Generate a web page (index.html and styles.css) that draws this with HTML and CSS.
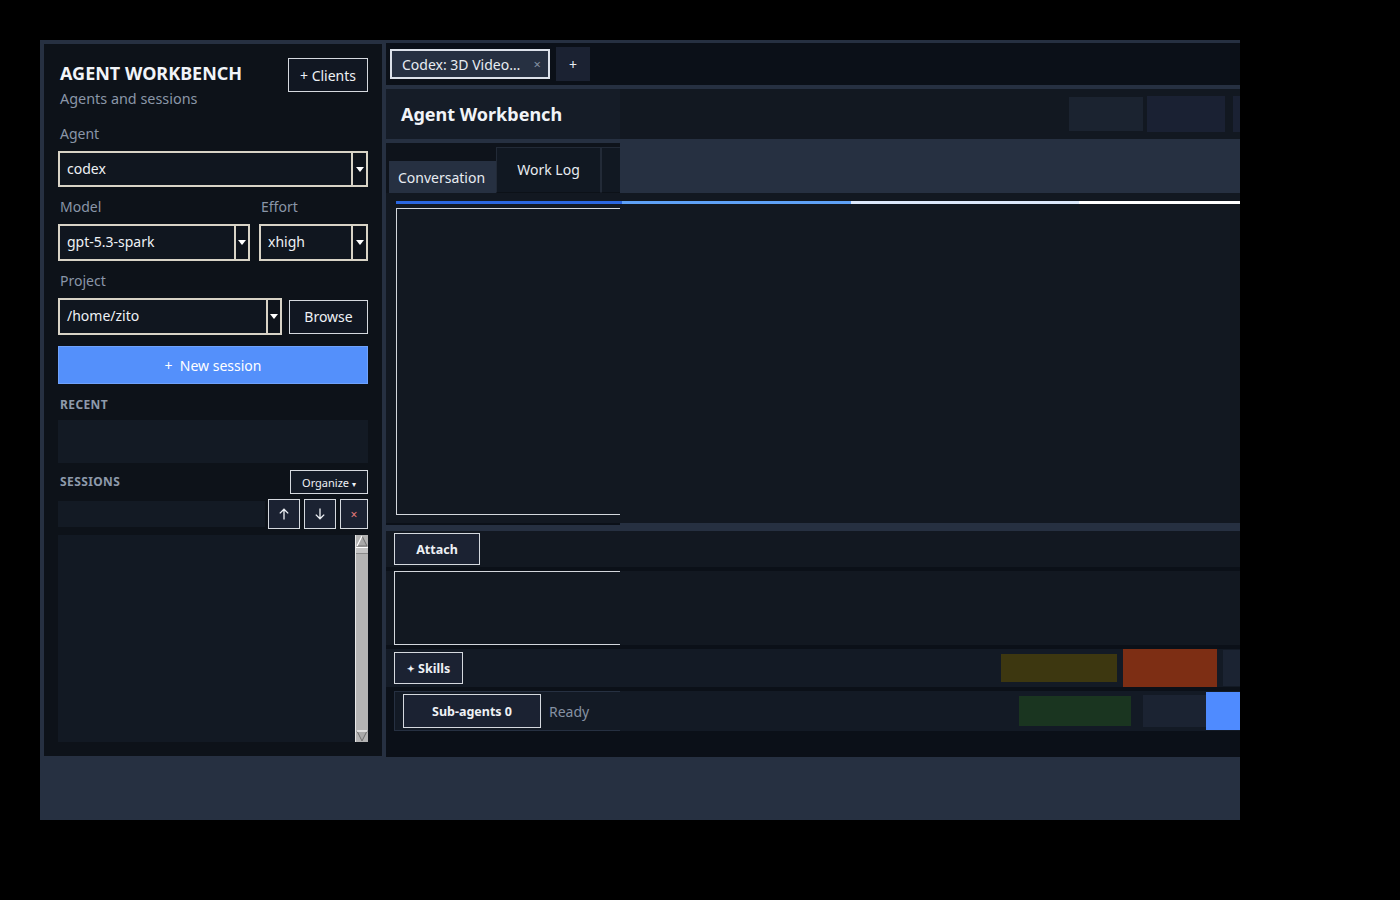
FILE: index.html
```html
<!DOCTYPE html>
<html>
<head>
    <meta charset="utf-8">
    <title>Agent Workbench</title>
    <link rel="stylesheet" href="styles.css">
</head>
<body>
<div class="app">
    <aside class="sidebar">
        <div class="brand">
            <div>
                <div class="brand-title">AGENT WORKBENCH</div>
                <div class="brand-sub">Agents and sessions</div>
            </div>
            <button class="btn clients">+ Clients</button>
        </div>

        <div class="label first">Agent</div>
        <div class="select"><span class="field">codex</span><span class="drop"><i></i></span></div>

        <div class="pair">
            <div class="col model">
                <div class="label">Model</div>
                <div class="select"><span class="field">gpt-5.3-spark</span><span class="drop"><i></i></span></div>
            </div>
            <div class="col effort">
                <div class="label">Effort</div>
                <div class="select"><span class="field">xhigh</span><span class="drop"><i></i></span></div>
            </div>
        </div>

        <div class="label project-label">Project</div>
        <div class="project-row">
            <div class="select project"><span class="field">/home/zito</span><span class="drop"><i></i></span></div>
            <button class="btn browse">Browse</button>
        </div>

        <button class="new-session">+&nbsp;&nbsp;New session</button>

        <div class="section-title recent-title">RECENT</div>
        <div class="recent"></div>

        <div class="sessions-head">
            <div class="section-title">SESSIONS</div>
            <button class="btn organize">Organize <span class="caret">▾</span></button>
        </div>
        <div class="search-row">
            <div class="search"></div>
            <button class="btn icon" title="Move up">
                <svg width="12" height="12" viewBox="0 0 12 12"><path d="M6 11.5 V1.2 M1.8 5.4 L6 1.2 L10.2 5.4" fill="none" stroke="#eef1f5" stroke-width="1.3"/></svg>
            </button>
            <button class="btn icon" title="Move down">
                <svg width="12" height="12" viewBox="0 0 12 12"><path d="M6 0.5 V10.8 M1.8 6.6 L6 10.8 L10.2 6.6" fill="none" stroke="#eef1f5" stroke-width="1.3"/></svg>
            </button>
            <button class="btn icon del" title="Delete">×</button>
        </div>
        <div class="session-list">
            <div class="scrollbar">
                <div class="sb-arrow up">
                    <svg width="12" height="12" viewBox="0 0 12 12"><path d="M1 11 L6 1 L11 11 Z" fill="#a9a9a9" stroke="#6e6e6e" stroke-width="1"/><path d="M1 11 L6 1" stroke="#ffffff" stroke-width="1.4"/></svg>
                </div>
                <div class="sb-thumb"></div>
                <div class="sb-trough"></div>
                <div class="sb-arrow down">
                    <svg width="12" height="12" viewBox="0 0 12 12"><path d="M1 1 L6 11 L11 1 Z" fill="#a9a9a9" stroke="#6e6e6e" stroke-width="1"/><path d="M1 1 L11 1" stroke="#ffffff" stroke-width="1.4"/></svg>
                </div>
            </div>
        </div>
    </aside>

    <main class="main">
        <div class="tabbar">
            <div class="doc-tab"><span>Codex: 3D Video…</span><span class="close">×</span></div>
            <button class="add-tab">+</button>
        </div>

        <div class="header">
            <div class="header-main">Agent Workbench</div>
            <div class="header-tools">
                <div class="tool t1"></div>
                <div class="tool t2"></div>
                <div class="tool t3"></div>
            </div>
        </div>

        <div class="notebook">
            <div class="nb-tabs">
                <div class="nb-strip">
                    <div class="nb-tab active">Conversation</div>
                    <div class="nb-tab">Work Log</div>
                    <div class="nb-tab stub"></div>
                </div>
            </div>
            <div class="nb-body">
                <div class="progress">
                    <span class="seg s1"></span>
                    <span class="seg s2"></span>
                    <span class="seg s3"></span>
                    <span class="seg s4"></span>
                </div>
                <div class="convo-clip"><div class="convo-box"></div></div>
            </div>
            <div class="nb-foot"></div>
        </div>

        <div class="composer">
            <div class="row attach-row">
                <button class="btn dark bold attach">Attach</button>
            </div>
            <div class="row text-row">
                <div class="text-clip"><div class="text-box"></div></div>
            </div>
            <div class="row skills-row">
                <button class="btn dark bold skills"><span class="star">✦</span> Skills</button>
                <div class="chip olive"></div>
                <div class="chip orange"></div>
                <div class="chip slate"></div>
            </div>
            <div class="row status-row">
                <div class="status-left">
                    <button class="btn dark bold subagents">Sub-agents 0</button>
                    <span class="ready">Ready</span>
                </div>
                <div class="chip green"></div>
                <div class="chip slate small"></div>
                <div class="chip blue"></div>
            </div>
        </div>
    </main>
</div>
</body>
</html>
```

FILE: styles.css
```css
body {
    margin: 0;
    background-color: #000000;
    font-family: "Noto Sans", "Open Sans", sans-serif;
    color: #eef1f5;
}
button {
    font-family: "Noto Sans", "Open Sans", sans-serif;
    cursor: pointer;
}
.app {
    margin: 40px 0 0 40px;
    width: 1200px;
    height: 780px;
    box-sizing: border-box;
    padding: 3px 0 0 4px;
    background-color: #263041;
    display: flex;
    gap: 4px;
    align-items: flex-start;
}

/* sidebar */
.sidebar {
    margin-top: 1px;
    width: 338px;
    height: 712px;
    box-sizing: border-box;
    padding: 14px;
    background-color: #0d1219;
    display: flex;
    flex-direction: column;
}
.brand {
    display: flex;
    justify-content: space-between;
    align-items: flex-start;
}
.brand-title {
    margin-top: 3px;
    font-size: 18px;
    line-height: 24px;
    font-weight: bold;
    color: #f1f4f8;
    padding-left: 2px;
}
.brand-sub {
    margin-top: 4px;
    font-size: 14.4px;
    line-height: 20px;
    color: #8a96a8;
    padding-left: 2px;
}
.btn {
    background-color: #111722;
    border: 1px solid #d5d9df;
    color: #eef1f5;
    font-size: 14px;
    padding: 0;
}
.clients {
    width: 80px;
    height: 34px;
}
.label {
    font-size: 14px;
    line-height: 20px;
    color: #8a96a8;
    padding-left: 2px;
    margin-bottom: 7px;
}
.label.first {
    margin-top: 15px;
}
.select {
    display: flex;
    height: 36px;
}
.select .field {
    flex: 1;
    border: 2px solid #d8d3c6;
    background-color: #10161f;
    padding-left: 7px;
    font-size: 14px;
    line-height: 32px;
    color: #eef1f5;
    white-space: nowrap;
    overflow: hidden;
}
.select .drop {
    width: 13px;
    border: 2px solid #d8d3c6;
    border-left: none;
    background-color: #0e131b;
    display: flex;
    align-items: center;
    justify-content: center;
}
.select .drop i {
    width: 0;
    height: 0;
    border-left: 4px solid transparent;
    border-right: 4px solid transparent;
    border-top: 5px solid #ffffff;
}
.pair {
    display: flex;
    gap: 9px;
    margin-top: 10px;
}
.col.model {
    width: 192px;
}
.col.effort {
    flex: 1;
}
.col.model .drop {
    width: 12px;
}
.pair .select {
    height: 37px;
}
.project-label {
    margin-top: 10px;
}
.project-row {
    display: flex;
    align-items: center;
    gap: 7px;
}
.select.project {
    width: 224px;
    height: 37px;
}
.select.project .drop {
    width: 12px;
}
.browse {
    width: 79px;
    height: 34px;
}
.new-session {
    margin-top: 11px;
    height: 38px;
    background-color: #5490fb;
    border: 1px solid #6fa2fc;
    color: #ffffff;
    font-size: 14px;
}
.section-title {
    font-size: 12px;
    line-height: 16px;
    font-weight: bold;
    letter-spacing: 0.4px;
    color: #8e9aab;
    padding-left: 2px;
}
.recent-title {
    margin-top: 13px;
}
.recent {
    margin-top: 7px;
    height: 43px;
    background-color: #131a24;
}
.sessions-head {
    margin-top: 7px;
    height: 24px;
    display: flex;
    justify-content: space-between;
    align-items: center;
}
.organize {
    width: 78px;
    height: 24px;
    font-size: 11px;
    background-color: #141b27;
}
.organize .caret {
    font-size: 8px;
}
.search-row {
    margin-top: 5px;
    height: 30px;
    display: flex;
    align-items: center;
    gap: 4px;
}
.search {
    flex: 1;
    height: 26px;
    margin-right: -1px;
    background-color: #131a24;
}
.icon {
    width: 32px;
    height: 30px;
    background-color: #1b2232;
    display: flex;
    align-items: center;
    justify-content: center;
}
.icon.del {
    width: 28px;
    color: #e57b7b;
    font-size: 12px;
}
.session-list {
    margin-top: 6px;
    height: 207px;
    background-color: #121923;
    display: flex;
    justify-content: flex-end;
}
.scrollbar {
    width: 13px;
    display: flex;
    flex-direction: column;
    background-color: #b3b3b3;
    border-left: 1px solid #e8e8e8;
    box-sizing: border-box;
}
.sb-arrow {
    height: 12px;
    display: flex;
    justify-content: center;
}
.sb-thumb {
    height: 5px;
    border-top: 1px solid #ffffff;
    border-bottom: 1px solid #8a8a8a;
    background-color: #c4c4c4;
}
.sb-trough {
    flex: 1;
}

/* main area */
.main {
    width: 854px;
    height: 714px;
    display: flex;
    flex-direction: column;
    overflow: hidden;
}
.tabbar {
    height: 42px;
    flex-shrink: 0;
    box-sizing: border-box;
    padding: 6px 0 0 4px;
    background-color: #0b1018;
    display: flex;
    align-items: flex-start;
    gap: 6px;
}
.doc-tab {
    width: 160px;
    height: 30px;
    box-sizing: border-box;
    border: 2px solid #dce1e9;
    background-color: #263041;
    display: flex;
    align-items: center;
    justify-content: space-between;
    padding: 0 7px 0 10px;
    font-size: 14px;
    color: #e8ecf1;
}
.doc-tab .close {
    font-size: 13px;
    color: #8390a2;
}
.add-tab {
    width: 34px;
    height: 34px;
    margin-top: -2px;
    border: none;
    background-color: #1b2232;
    color: #e8ecf1;
    font-size: 14px;
}
.header {
    margin-top: 4px;
    height: 50px;
    flex-shrink: 0;
    background-color: #121821;
    display: flex;
}
.header-main {
    width: 234px;
    flex-shrink: 0;
    box-sizing: border-box;
    padding-left: 15px;
    background-color: #151c27;
    font-size: 18px;
    font-weight: bold;
    line-height: 50px;
    color: #f1f4f8;
}
.header-tools {
    margin-left: 449px;
    display: flex;
    align-items: center;
    flex-shrink: 0;
}
.tool {
    flex-shrink: 0;
    background-color: #1a2133;
}
.tool.t1 {
    width: 74px;
    height: 34px;
    background-color: #1b2330;
}
.tool.t2 {
    width: 78px;
    height: 36px;
    margin-left: 4px;
}
.tool.t3 {
    width: 80px;
    height: 36px;
    margin-left: 8px;
}
.notebook {
    margin-top: 4px;
    flex-shrink: 0;
}
.nb-tabs {
    height: 50px;
    display: flex;
}
.nb-strip {
    width: 234px;
    overflow: hidden;
    box-sizing: border-box;
    padding-left: 3px;
    background-color: #0e131b;
    display: flex;
    align-items: flex-end;
}
.nb-tab {
    flex-shrink: 0;
    width: 105px;
    height: 46px;
    box-sizing: border-box;
    border: 1px solid #222a37;
    border-bottom-color: #0c1118;
    background-color: #111822;
    font-size: 14px;
    line-height: 20px;
    text-align: center;
    padding-top: 12px;
    color: #e8ecf1;
}
.nb-tab.active {
    width: 107px;
    height: 32px;
    border: none;
    background-color: #263041;
    text-align: left;
    padding: 7px 0 0 9px;
}
.nb-tab.stub {
    width: 30px;
}
.nb-body {
    height: 330px;
    box-sizing: border-box;
    padding: 8px 0 0 10px;
    background-color: #121821;
}
.progress {
    display: flex;
    height: 3px;
}
.seg {
    flex-shrink: 0;
}
.seg.s1 {
    width: 226px;
    background-color: #2a66e0;
}
.seg.s2 {
    width: 229px;
    background-color: #5ea1f7;
}
.seg.s3 {
    width: 228px;
    background-color: #dce8fb;
}
.seg.s4 {
    flex: 1;
    background-color: #ffffff;
}
.convo-clip {
    margin-top: 4px;
    width: 224px;
    overflow: hidden;
}
.convo-box {
    width: 300px;
    height: 307px;
    box-sizing: border-box;
    border: 1px solid #d3d7dd;
}
.nb-foot {
    width: 234px;
    height: 2px;
    background-color: #0b1018;
}
.composer {
    margin-top: 6px;
    height: 226px;
    box-sizing: border-box;
    padding-bottom: 26px;
    background-color: #0b1018;
    display: flex;
    flex-direction: column;
    gap: 4px;
}
.row {
    display: flex;
    align-items: center;
    box-sizing: border-box;
    padding-left: 8px;
}
.btn.dark {
    background-color: #1b2232;
}
.btn.bold {
    font-weight: bold;
    font-size: 12.5px;
    flex-shrink: 0;
}
.attach-row {
    height: 36px;
    background-color: #121821;
}
.attach {
    width: 86px;
    height: 32px;
}
.text-row {
    height: 74px;
    background-color: #121821;
    align-items: stretch;
}
.text-clip {
    width: 226px;
    overflow: hidden;
}
.text-box {
    width: 300px;
    height: 74px;
    box-sizing: border-box;
    border: 1px solid #d3d7dd;
}
.skills-row {
    height: 38px;
    background-color: #131a25;
}
.skills {
    width: 69px;
    height: 32px;
}
.star {
    font-size: 9px;
    vertical-align: 1px;
}
.chip {
    flex-shrink: 0;
}
.chip.olive {
    margin-left: 538px;
    width: 116px;
    height: 28px;
    background-color: #3d3710;
}
.chip.orange {
    margin-left: 6px;
    width: 94px;
    height: 38px;
    background-color: #7d2e14;
}
.chip.slate {
    margin-left: 6px;
    width: 80px;
    height: 36px;
    background-color: #1b2332;
}
.status-row {
    height: 40px;
    margin-left: 8px;
    padding-left: 0;
    background-color: #131a25;
}
.status-left {
    width: 226px;
    height: 40px;
    flex-shrink: 0;
    box-sizing: border-box;
    border: 1px solid #263041;
    border-right: none;
    padding-left: 8px;
    display: flex;
    align-items: center;
}
.subagents {
    width: 138px;
    height: 34px;
}
.ready {
    margin-left: 8px;
    font-size: 14px;
    color: #8591a2;
}
.chip.green {
    margin-left: 399px;
    width: 112px;
    height: 30px;
    background-color: #1a3520;
}
.chip.slate.small {
    margin-left: 12px;
    width: 63px;
    height: 32px;
}
.chip.blue {
    width: 60px;
    height: 38px;
    background-color: #4f8bff;
}
```
